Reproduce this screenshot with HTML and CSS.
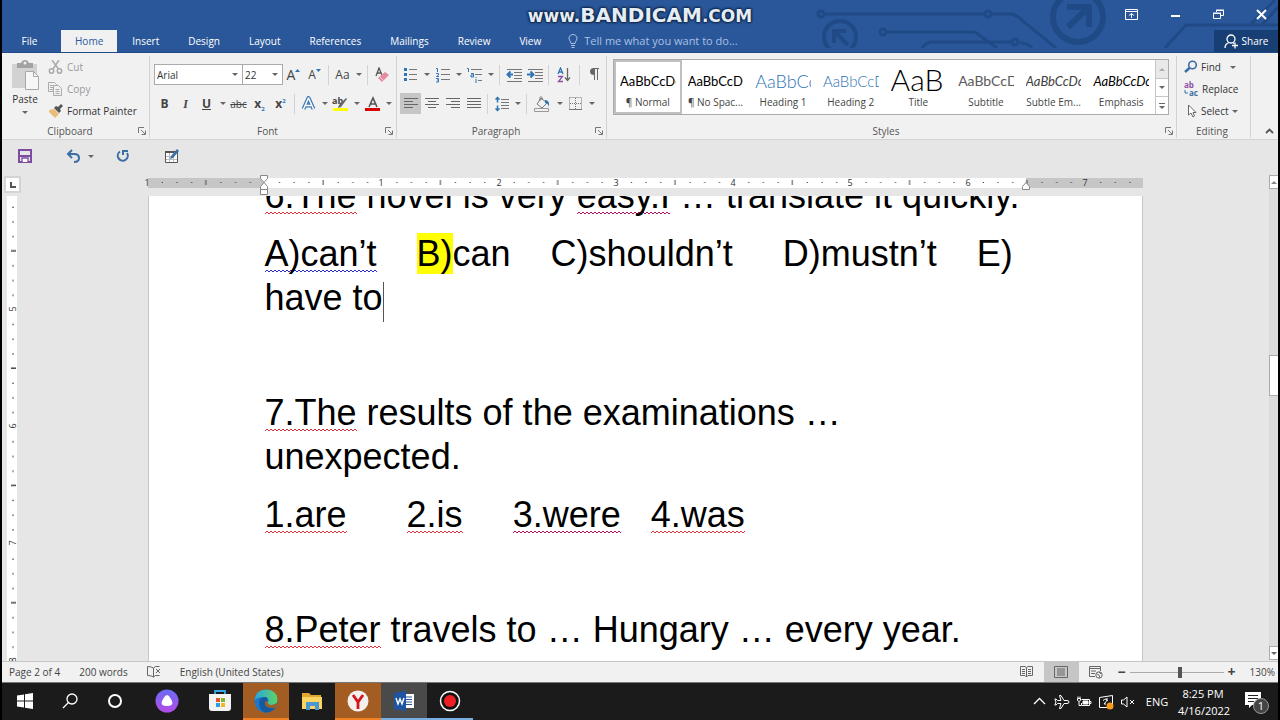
FILE: index.html
```html
<!DOCTYPE html>
<html lang="en">
<head>
  <meta charset="UTF-8" />
  <meta name="viewport" content="width=device-width, initial-scale=1.0" />
  <title>Word</title>
  <link rel="stylesheet" href="styles.css">
</head>
<body>
  <header class="top">
    <svg class="circuit" width="463" height="48" viewBox="815 0 463 48" fill="none" stroke="#1f4a86" stroke-width="3">
      <circle cx="821" cy="14" r="3"/><path d="M825 14H984M992 14h20q6 2 12 8l32 26"/><circle cx="988" cy="14" r="3"/>
      <circle cx="883" cy="32" r="3"/><path d="M887 32h88l22 16M922 48q4-6 10-6h80M1020 43q8 0 12 5"/><circle cx="1015" cy="42" r="3"/>
      <circle cx="840" cy="37" r="16" stroke-width="4"/><path d="M834 43V31h12M835 32l13 13" stroke-width="4"/>
      <circle cx="1078" cy="17" r="25" stroke-width="6"/><path d="M1067 7h22v20M1088 8l-20 19" stroke-width="6"/>
      <path d="M1165 48l21-23h92M1250 25l25-25M1262 25l16-18"/>
    </svg>
    <div class="title-bar">
      <div class="watermark">www.<b>BANDICAM</b>.COM</div>
      <div class="window-buttons">
        <button aria-label="Ribbon display options"><svg width="13" height="11" viewBox="0 0 13 11" fill="none" stroke="#fff"><path d="M.5 .5h12v10H.5zM.5 2.5h12M6.500 9V4.500M4 6.500l2.500-2 2.500 2"/></svg></button>
        <button aria-label="Minimize"><svg width="11" height="11" viewBox="0 0 11 11"><path d="M1 6h9v2H1z" fill="#fff"/></svg></button>
        <button aria-label="Restore"><svg width="11" height="11" viewBox="0 0 11 11" fill="none" stroke="#fff"><path d="M3.500 3V1.500h7v5H8M.5 4.500h7v5h-7zM3 1h8M0 4h8"/></svg></button>
        <button aria-label="Close"><svg width="11" height="11" viewBox="0 0 11 11" stroke="#fff" stroke-width="2"><path d="M1 1l9 9M10 1l-9 9"/></svg></button>
      </div>
    </div>
    <nav class="tabs">
      <button class="tab file">File</button>
      <button class="tab active">Home</button>
      <button class="tab">Insert</button>
      <button class="tab">Design</button>
      <button class="tab">Layout</button>
      <button class="tab">References</button>
      <button class="tab">Mailings</button>
      <button class="tab">Review</button>
      <button class="tab">View</button>
      <label class="tell-me">
        <svg width="10" height="14" viewBox="0 0 10 14" fill="none" stroke="#a9c1e4"><path d="M3 9.500Q3 8 1.800 6.800A4 4 0 1 1 8.200 6.800Q7 8 7 9.500zM3 11.500h4M3.500 13.500h3"/></svg>
        <input type="text" aria-label="Tell me" placeholder="Tell me what you want to do...">
      </label>
      <button class="share">
        <svg width="15" height="15" viewBox="0 0 15 15" fill="none" stroke="#fff" stroke-width="1.300"><circle cx="7" cy="5" r="4"/><path d="M1 14q0-4 4-5.500M9 8.500l1 1M8 11.500h6M11 8.500v6"/></svg>
        Share
      </button>
    </nav>
  </header>

  <div class="ribbon">
    <section class="group clipboard">
      <div class="group-body">
        <button class="paste">
          <svg width="28" height="30" viewBox="0 0 28 30"><path d="M1 4h25v24H1z" fill="#d2d2d2"/><path d="M6 3h4q1-3 4-3t4 3h4v5H6z" fill="#a3a3a3"/><circle cx="14" cy="3" r="1.500" fill="#eee"/><path d="M14.500 11.500h8l5 5v13h-13z" fill="#f6f6f6" stroke="#a8a8a8"/><path d="M22.500 11.500v5h5" fill="none" stroke="#a8a8a8"/></svg>
          <span>Paste</span>
          <i class="arrow"></i>
        </button>
        <div class="stack">
          <button disabled><svg width="16" height="14" viewBox="0 0 16 14" fill="none" stroke="#aaa" stroke-width="1.500"><path d="M4 0l6.500 9M11 0L5 9"/><circle cx="3.500" cy="11" r="2.200"/><circle cx="11.500" cy="11" r="2.200"/></svg>Cut</button>
          <button disabled><svg width="16" height="14" viewBox="0 0 16 14" fill="#f1f1f1" stroke="#aaa"><path d="M.5 .5h6l2 2v7h-8zM2 3.500h3M2 5.500h4M2 7.500h4"/><path d="M5.500 3.500h5l3 3v7h-8zM7.500 7.500h4M7.500 9.500h4M7.500 11.500h4"/></svg>Copy</button>
          <button><svg width="16" height="14" viewBox="0 0 16 14"><path d="M1 6l5-1 5 5-4 4-6-6z" fill="#e8bd79"/><path d="M6 4l2-2 2 1 3-3 2 2-3 3 1 2-2 2z" fill="#555"/></svg>Format Painter</button>
        </div>
      </div>
      <div class="group-label"><span>Clipboard</span><button class="launcher" aria-label="Clipboard settings"></button></div>
    </section>

    <section class="group font">
      <div class="group-body rows">
        <div class="row">
          <select class="font-name" aria-label="Font"><option>Arial</option></select>
          <select class="font-size" aria-label="Font size"><option>22</option></select>
          <button class="tool glyph" aria-label="Grow font"><span class="big">A</span><svg width="5" height="14" viewBox="0 0 5 14"><path d="M0 4l2.500-3L5 4z" fill="#2e75b6"/></svg></button>
          <button class="tool glyph" aria-label="Shrink font"><span>A</span><svg width="5" height="14" viewBox="0 0 5 14"><path d="M0 1h5L2.500 4z" fill="#2e75b6"/></svg></button>
          <i class="sep"></i>
          <button class="tool glyph">Aa</button><button class="drop" aria-label="Change case"></button>
          <i class="sep"></i>
          <button class="tool glyph" aria-label="Clear formatting"><svg width="16" height="16" viewBox="0 0 16 16"><path d="M2 9l3-8 3 7M3 6h4" fill="none" stroke="#555" stroke-width="1.300"/><path d="M4 11l7-6 4 3-7 7z" fill="#e68aa0"/><path d="M6 10l4 4" stroke="#f7d7de"/></svg></button>
        </div>
        <div class="row">
          <button class="tool glyph"><b>B</b></button>
          <button class="tool glyph"><b class="italic">I</b></button>
          <button class="tool glyph"><b class="under">U</b></button><button class="drop" aria-label="Underline style"></button>
          <button class="tool glyph"><s>abc</s></button>
          <button class="tool glyph"><b>x<sub>2</sub></b></button>
          <button class="tool glyph"><b>x<sup>2</sup></b></button>
          <i class="sep"></i>
          <button class="tool glyph" aria-label="Text effects"><svg width="15" height="15" viewBox="0 0 15 15" fill="none" stroke-linejoin="round"><path d="M2.500 13l5-11 5 11M4.500 9.500h6" stroke="#3a78b5" stroke-width="4"/><path d="M2.500 13l5-11 5 11M4.500 9.500h6" stroke="#fff" stroke-width="1.500"/></svg></button><button class="drop" aria-label="Text effect styles"></button>
          <button class="tool glyph" aria-label="Highlight"><svg width="17" height="16" viewBox="0 0 17 16"><text x="0" y="8" class="mark">ab</text><path d="M14 2l1 1-6 8-3 1 1-3z" fill="#666"/><path d="M1 12h15v3H1z" fill="#ff0"/></svg></button><button class="drop" aria-label="Highlight colour"></button>
          <button class="tool glyph" aria-label="Font colour"><svg width="16" height="16" viewBox="0 0 16 16"><path d="M4 11l4-9 4 9M5.500 8h5" fill="none" stroke="#555" stroke-width="1.600"/><path d="M0 12h15v3H0z" fill="#d80000"/></svg></button><button class="drop" aria-label="Font colours"></button>
        </div>
      </div>
      <div class="group-label"><span>Font</span><button class="launcher" aria-label="Font settings"></button></div>
    </section>

    <section class="group paragraph">
      <div class="group-body rows">
        <div class="row">
          <button class="tool" aria-label="Bullets"><svg width="14" height="15" viewBox="0 0 14 15"><path d="M0 1h3v3H0zM0 6h3v3H0zM0 11h3v3H0z" fill="#2e75b6"/><path d="M5 2.500h8M5 7.500h8M5 12.500h8" stroke="#777"/></svg></button><button class="drop" aria-label="Bullet styles"></button>
          <button class="tool" aria-label="Numbering"><svg width="14" height="16" viewBox="0 0 14 16"><path d="M0 1.500h1.500V5M0 6.500h2.500v1.500L.5 9.500H3M0 11.500h2.500v3.500H0M1 13h1.500" fill="none" stroke="#2e75b6"/><path d="M5 2.500h9M5 7.500h9M5 12.500h9" stroke="#777"/></svg></button><button class="drop" aria-label="Number styles"></button>
          <button class="tool" aria-label="Multilevel list"><svg width="16" height="16" viewBox="0 0 16 16"><path d="M0 1.500h1.500V5M4 6.500h2.500V10H4V8h2M9 10v1M9 12v4" fill="none" stroke="#2e75b6"/><path d="M4 2.500h11M8 7.500h7M11 13.500h4" stroke="#777"/></svg></button><button class="drop" aria-label="List styles"></button>
          <i class="sep"></i>
          <button class="tool" aria-label="Decrease indent"><svg width="16" height="14" viewBox="0 0 16 14"><path d="M1 1.500h15M8 4.500h8M8 7.500h8M8 10.500h8M1 13.500h15" stroke="#777"/><path d="M7 6.500H2M4.500 3.500l-3 3 3 3" fill="none" stroke="#2e75b6" stroke-width="2"/></svg></button>
          <button class="tool" aria-label="Increase indent"><svg width="16" height="14" viewBox="0 0 16 14"><path d="M1 1.500h15M8 4.500h8M8 7.500h8M8 10.500h8M1 13.500h15" stroke="#777"/><path d="M0 6.500h6M3.500 3.500l3 3-3 3" fill="none" stroke="#2e75b6" stroke-width="2"/></svg></button>
          <i class="sep"></i>
          <button class="tool wide" aria-label="Sort"><svg width="14" height="16" viewBox="0 0 14 16" fill="none"><path d="M1 7l2.500-6L6 7M2 5h3" stroke="#2e75b6" stroke-width="1.300"/><path d="M1 9.500h4.500l-4 5H6" stroke="#8a50a8" stroke-width="1.300"/><path d="M10.500 1v12M8 10.500l2.500 3 2.500-3" stroke="#666" stroke-width="1.300"/></svg></button>
          <i class="sep"></i>
          <button class="tool" aria-label="Show marks"><svg width="10" height="13" viewBox="0 0 10 13"><path d="M5 0h5v1H9v11H8V1H6v11H5V7Q1 7 1 3.500T5 0z" fill="#666"/></svg></button>
        </div>
        <div class="row">
          <button class="tool pressed" aria-label="Align left"><svg width="14" height="12" viewBox="0 0 14 12" stroke="#666"><path d="M0 .5h14M0 3.500h9M0 6.500h14M0 9.500h9"/></svg></button>
          <button class="tool" aria-label="Center"><svg width="14" height="12" viewBox="0 0 14 12" stroke="#666"><path d="M0 .5h14M3 3.500h8M0 6.500h14M3 9.500h8"/></svg></button>
          <button class="tool" aria-label="Align right"><svg width="14" height="12" viewBox="0 0 14 12" stroke="#666"><path d="M0 .5h14M5 3.500h9M0 6.500h14M5 9.500h9"/></svg></button>
          <button class="tool" aria-label="Justify"><svg width="14" height="12" viewBox="0 0 14 12" stroke="#666"><path d="M0 .5h14M0 3.500h14M0 6.500h14M0 9.500h14"/></svg></button>
          <i class="sep"></i>
          <button class="tool" aria-label="Line spacing"><svg width="14" height="16" viewBox="0 0 14 16"><path d="M6 3.500h8M6 6.500h8M6 9.500h8M6 12.500h8" stroke="#777"/><path d="M2.500 1v5.500M.5 3.500l2-2 2 2M2.500 15V9.500M.5 12.500l2 2 2-2" fill="none" stroke="#2e75b6" stroke-width="1.500"/></svg></button><button class="drop" aria-label="Line spacing options"></button>
          <i class="sep"></i>
          <button class="tool wide" aria-label="Shading"><svg width="16" height="16" viewBox="0 0 16 16" fill="none"><path d="M7 2l6 5-5 5-5-4zM6 5V1.500q1-2 2 0V4" stroke="#777"/><path d="M11 4q5 0 4 7-1-4-4-4z" fill="#2e75b6"/><path d="M.5 12.500h14v3H.5z" stroke="#999"/></svg></button><button class="drop" aria-label="Shading colours"></button>
          <button class="tool" aria-label="Borders"><svg width="14" height="14" viewBox="0 0 14 14" fill="none" stroke="#777"><path d="M.5 .5h12v12M.5 .5v12M6.500 1v11M1 6.500h11" stroke-dasharray="1 1"/><path d="M0 12.500h13"/></svg></button><button class="drop" aria-label="Border styles"></button>
        </div>
      </div>
      <div class="group-label"><span>Paragraph</span><button class="launcher" aria-label="Paragraph settings"></button></div>
    </section>

    <section class="group styles">
      <div class="group-body">
        <div class="gallery">
          <button class="style selected"><span class="sample">AaBbCcDc</span><span>¶ Normal</span></button>
          <button class="style"><span class="sample">AaBbCcDc</span><span>¶ No Spac...</span></button>
          <button class="style"><span class="sample h1">AaBbCc</span><span>Heading 1</span></button>
          <button class="style"><span class="sample h2">AaBbCcD</span><span>Heading 2</span></button>
          <button class="style"><span class="sample title">AaB</span><span>Title</span></button>
          <button class="style"><span class="sample subtitle">AaBbCcD</span><span>Subtitle</span></button>
          <button class="style"><span class="sample subtle">AaBbCcDc</span><span>Subtle Em...</span></button>
          <button class="style"><span class="sample emphasis">AaBbCcDc</span><span>Emphasis</span></button>
          <div class="gallery-scroll">
            <button disabled aria-label="Previous styles"><i class="arrow up"></i></button>
            <button aria-label="Next styles"><i class="arrow"></i></button>
            <button class="more" aria-label="More styles"><i class="arrow"></i></button>
          </div>
        </div>
      </div>
      <div class="group-label"><span>Styles</span><button class="launcher" aria-label="Styles settings"></button></div>
    </section>

    <section class="group editing">
      <div class="group-body">
        <div class="stack">
          <button><svg width="14" height="14" viewBox="0 0 14 14" fill="none" stroke="#3a6ea5"><circle cx="8.500" cy="5" r="3.800" stroke-width="1.600"/><path d="M5.500 8L1 12" stroke-width="2.500"/></svg>Find<i class="arrow gap"></i></button>
          <button><svg width="15" height="16" viewBox="0 0 15 16"><text x="0" y="7" class="rep a">ab</text><text x="5" y="15" class="rep b">ac</text><path d="M1 9v3h3" fill="none" stroke="#2e75b6"/></svg>Replace</button>
          <button><svg width="14" height="14" viewBox="0 0 14 14" fill="#fff" stroke="#666"><path d="M4.500 1v10l2.500-2 2 4 1.500-1-1.500-3.500h3z"/></svg>Select<i class="arrow"></i></button>
        </div>
      </div>
      <div class="group-label"><span>Editing</span></div>
    </section>
    <button class="collapse" aria-label="Collapse the ribbon"><svg width="9" height="6" viewBox="0 0 9 6" fill="none" stroke="#555" stroke-width="1.800"><path d="M1 5l3.500-3.500L8 5"/></svg></button>
  </div>

  <div class="quick-access">
    <button aria-label="Save"><svg width="16" height="16" viewBox="0 0 16 16" fill="none" stroke="#7c4da0" stroke-width="2"><path d="M2 2h12v12H2zM3 8h10"/><path d="M5 14v-4h6v4" fill="#fff" stroke-width="1.300"/></svg></button>
    <button aria-label="Undo"><svg width="16" height="16" viewBox="0 0 16 16" fill="none" stroke="#3a6ea5" stroke-width="2"><path d="M6 2L2 6l4 4M2 6h6q5 0 5 4t-5 4"/></svg><i class="arrow"></i></button>
    <button aria-label="Repeat"><svg width="16" height="16" viewBox="0 0 16 16" fill="none" stroke="#3a6ea5" stroke-width="2"><path d="M5 3.500A5 5 0 1 0 12 5M8 7V3h5"/></svg></button>
    <button aria-label="Draw table"><svg width="16" height="16" viewBox="0 0 16 16"><path d="M1.500 3.500h12v11h-12z" fill="#fff" stroke="#555"/><path d="M1 3h9v2H1z" fill="#555"/><path d="M5.500 5v9M9.500 9v5M2 8.500h5M2 11.500h11" stroke="#bbb"/><path d="M13 1l2 2-6 7-3 1 1-3z" fill="#3a6ea5"/></svg></button>
  </div>

  <div class="workspace">
    <div class="view">
      <div class="ruler-row">
        <div class="corner"><button class="tab-stop" aria-label="Tab stop"><svg width="10" height="10" viewBox="0 0 10 10"><path d="M3 2v5h5" fill="none" stroke="#555" stroke-width="2"/></svg></button></div>
        <svg class="ruler" width="995" height="10" viewBox="0 0 995 10">
          <defs>
            <pattern id="inch" x="-1" width="117.300" height="10" patternUnits="userSpaceOnUse">
              <path d="M14.700 4.500h1.200M29.300 4.500h1.200M44 4.500h1.200M73.300 4.500h1.200M88 4.500h1.200M102.600 4.500h1.200M58.800 2v5" stroke="#444"/>
            </pattern>
          </defs>
          <path d="M0 0h995v10H0z" fill="#c6c6c6"/><path d="M116 0h762v10H116z" fill="#fff"/>
          <path d="M0 0h995v10H0z" fill="url(#inch)"/>
          <g class="num"><text x="-1" y="8">1</text><text x="233" y="8">1</text><text x="351" y="8">2</text><text x="468" y="8">3</text><text x="585" y="8">4</text><text x="702" y="8">5</text><text x="820" y="8">6</text><text x="937" y="8">7</text></g>
          <g fill="#fff" stroke="#888"><path d="M112.500-2.500h7v3L116 4.500 112.500.5zM116 4.500l3.500 4v3h-7v-3zM112.500 11.500h7v5h-7zM878 4.500l3.500 4v3h-7v-3z"/></g>
        </svg>
      </div>
      <div class="canvas-row">
        <div class="side">
          <svg class="v-ruler" width="10" height="466" viewBox="0 0 10 466">
            <defs>
              <pattern id="vinch" y="-4" width="10" height="117.300" patternUnits="userSpaceOnUse">
                <path d="M6 14.700v1.200M6 29.300v1.200M6 44v1.200M6 73.300v1.200M6 88v1.200M6 102.600v1.200M4 58.800h5" stroke="#444" stroke-width="1.500"/>
              </pattern>
            </defs>
            <path d="M0 0h10v466H0z" fill="#fff"/><path d="M0 0h10v466H0z" fill="url(#vinch)"/>
            <g class="num"><text transform="translate(9 113) rotate(-90)">5</text><text transform="translate(9 230) rotate(-90)">6</text><text transform="translate(9 347) rotate(-90)">7</text><text transform="translate(9 464) rotate(-90)">8</text></g>
          </svg>
        </div>
        <main class="sheet">
          <article class="doc">
            <p><span class="wavy">6.The</span> novel is very <span class="wavy both">easy.I</span> … translate it quickly.</p>
            <p><span class="wavy grammar">A)can’t</span>    <mark>B)</mark>can    C)shouldn’t     D)mustn’t    E)<br>have to<i class="cursor"></i></p>
            <p class="blank"></p>
            <p><span class="wavy">7.The</span> results of the examinations …<br>unexpected.</p>
            <p><span class="wavy">1.are</span>      <span class="wavy">2.is</span>     <span class="wavy both">3.were</span>   <span class="wavy">4.was</span></p>
            <p class="blank"></p>
            <p><span class="wavy">8.Peter</span> travels to … Hungary … every year.</p>
          </article>
        </main>
      </div>
    </div>
    <div class="scrollbar">
      <button aria-label="Scroll up"><i class="arrow up"></i></button>
      <div class="before"></div>
      <div class="thumb"></div>
      <div class="after"></div>
      <button aria-label="Scroll down"><i class="arrow"></i></button>
    </div>
  </div>

  <footer class="status">
    <span>Page 2 of 4</span>
    <span>200 words</span>
    <svg width="14" height="12" viewBox="0 0 14 12" fill="none" stroke="#666"><path d="M6.500 2Q4 .5 .5 .5v9q4 0 6 1.500V2l2-1.500h4M6.500 11l2-1.500h4M9 3l4 4M13 3L9 7"/></svg>
    <span>English (United States)</span>
    <div class="views">
      <button aria-label="Read mode"><svg width="13" height="12" viewBox="0 0 13 12" fill="none" stroke="#666"><path d="M6.500 1.500L5 .5H.5v9H5l1.500 1.500L8 9.500h4.500v-9H8zV11M2 3.500h3M2 5.500h3M2 7.500h3M8 3.500h3M8 5.500h3M8 7.500h3"/></svg></button>
      <button class="on" aria-label="Print layout"><svg width="14" height="12" viewBox="0 0 14 12" fill="none" stroke="#666"><path d="M.5 .5h13v11H.5zM3 3h8M3 5h8M3 7h8M3 9h8"/></svg></button>
      <button aria-label="Web layout"><svg width="14" height="13" viewBox="0 0 14 13" fill="none" stroke="#666"><path d="M6 10.500H.5v-10h11V5M.5 2.500h11M2 5h5M2 7.500h4"/><circle cx="10" cy="9" r="3.200"/><path d="M8 8l2 1 1 3M10 6l2 2"/></svg></button>
    </div>
    <div class="zoom">
      <button aria-label="Zoom out">−</button>
      <input type="range" min="0" max="100" value="54" aria-label="Zoom">
      <button aria-label="Zoom in">+</button>
      <span>130%</span>
    </div>
  </footer>

  <div class="taskbar">
    <button aria-label="Start"><svg width="16" height="16" viewBox="0 0 16 16" fill="#fff"><path d="M0 2.500l7-1v6H0zM8 1.300L16 0v7.500H8zM0 8.500h7v6l-7-1zM8 8.500h8V16l-8-1.300z"/></svg></button>
    <button aria-label="Search"><svg width="16" height="16" viewBox="0 0 16 16" fill="none" stroke="#fff" stroke-width="1.300"><circle cx="10" cy="6" r="5"/><path d="M6.500 9.500L1 15"/></svg></button>
    <button aria-label="Cortana"><svg width="16" height="16" viewBox="0 0 16 16" fill="none" stroke="#fff" stroke-width="2"><circle cx="8" cy="8" r="6"/></svg></button>
    <button class="alice" aria-label="Alice"><svg width="24" height="24" viewBox="0 0 24 24"><defs><linearGradient id="al" x2="0" y2="1"><stop offset="0" stop-color="#6a6cf6"/><stop offset="1" stop-color="#b44be8"/></linearGradient></defs><circle cx="12" cy="12" r="11.500" fill="url(#al)"/><path d="M12 6q2 0 5 6 2 5-5 5t-5-5q3-6 5-6z" fill="#fff"/></svg></button>
    <button aria-label="Store"><svg width="22" height="24" viewBox="0 0 22 24"><path d="M6 6V2h10v4" fill="none" stroke="#35a7e8" stroke-width="1.800"/><path d="M0 5h22v14q0 3-3 3H3q-3 0-3-3z" fill="#f3f3f3"/><path d="M7 9h4v4H7z" fill="#e8532c"/><path d="M12 9h4v4h-4z" fill="#7db72f"/><path d="M7 14h4v4H7z" fill="#2d9fe0"/><path d="M12 14h4v4h-4z" fill="#f5b821"/></svg></button>
    <button class="orange" aria-label="Edge"><svg width="24" height="24" viewBox="0 0 24 24"><defs><linearGradient id="ed" x1="0" y1="0" x2="1" y2="0"><stop offset="0" stop-color="#2aa5e0"/><stop offset="1" stop-color="#5bd564"/></linearGradient></defs><circle cx="12" cy="12" r="11.500" fill="#1b78c8"/><path d="M.6 11Q1.500.6 12 .5q11 .5 11.500 9.500 0 6-6.500 6-4 0-3-3 1-1 0-3-1-2-4-2-6 0-9.400 3z" fill="url(#ed)"/><path d="M5 12q2-4 7-4 2 1 2 4-3-1-3 2 0 6 10 5-4 5-10 4.500Q5 22 5 12z" fill="#155a9c"/><path d="M14 12q-1 4 3 4 4 0 6-2l-1.500 4.500Q11 20 11 14q0-2 3-2z" fill="#a35c22"/></svg></button>
    <button aria-label="File Explorer"><svg width="22" height="20" viewBox="0 0 22 20"><path d="M1 2h7l2 2h10v13H1z" fill="#e2a72e"/><path d="M1 6h20v12H1z" fill="#fcd462"/><path d="M5 19v-8h13v8h-4v-4H9v4z" fill="#4a98d2"/></svg></button>
    <button class="orange" aria-label="Yandex"><svg width="22" height="22" viewBox="0 0 22 22"><circle cx="11" cy="11" r="10.500" fill="#f4f0ee"/><path d="M6 5l5 7 5-7M11 11v8" fill="none" stroke="#d4151c" stroke-width="2.800"/></svg></button>
    <button class="current" aria-label="Word"><svg width="22" height="20" viewBox="0 0 22 20"><path d="M11 3h10v14H11z" fill="#fff"/><path d="M13 6h6M13 8.500h6M13 11h6M13 13.500h6" stroke="#2a579a"/><path d="M1 2l12-2v20L1 18z" fill="#1f54a0"/><path d="M3 7l2 6 2-5 2 5 2-6" fill="none" stroke="#fff" stroke-width="1.400"/></svg></button>
    <button class="running" aria-label="Bandicam"><svg width="22" height="22" viewBox="0 0 22 22"><circle cx="11" cy="11" r="9.500" fill="#111" stroke="#fff" stroke-width="1.500"/><circle cx="11" cy="11" r="6" fill="#ee1f24"/></svg></button>
    <div class="tray">
      <svg width="16" height="16" viewBox="0 0 16 16" fill="none" stroke="#fff" stroke-width="1.300"><path d="M2 10l5.500-5.500L13 10"/></svg>
      <svg width="16" height="16" viewBox="0 0 16 16" fill="none" stroke="#fff"><path d="M15 8q0-1.500-2-1.500H10L7 1.500H5.500l1.500 5H3.500L2 5H.8L2 8 .8 11H2l1.500-1.500H7l-1.500 5H7l3-5h3q2 0 2-1.500z"/></svg>
      <svg width="16" height="16" viewBox="0 0 16 16" fill="none" stroke="#fff"><path d="M5.500 5.500h8v6h-8V9M13.500 7.500h1.500v2h-1.500"/><path d="M7 7h5v3H7z" fill="#fff"/><path d="M1.500 4.500h3v2q-1.500 2-3 0zM2 4V2.500M4 4V2.500M3 8v3.500h2"/></svg>
      <svg width="16" height="16" viewBox="0 0 16 16" fill="none" stroke="#fff"><path d="M1.500 3.500l13-2v9M9 13.500H1.500v-10M5 6.500q4-3 4 0L6 10h2M9 4v3"/><circle cx="12" cy="12" r="3.500" fill="#f79a1e" stroke="none"/></svg>
      <svg width="16" height="16" viewBox="0 0 16 16" fill="none" stroke="#fff"><path d="M1.500 6v4h2l3.500 3V3L3.500 6zM10 6l4 4M14 6l-4 4"/></svg>
      <span class="lang">ENG</span>
      <time class="clock">8:25 PM<br>4/16/2022</time>
      <button class="notice" aria-label="Notifications"><svg width="26" height="26" viewBox="0 0 26 26"><path d="M2 3h16v13h-9l-3 3v-3H2z" fill="#fff"/><path d="M5 6.500h10M5 9.500h10M5 12.500h6" stroke="#222"/><circle cx="18" cy="17" r="7.500" fill="#444" stroke="#999"/><text x="18" y="21" class="badge">1</text></svg></button>
    </div>
  </div>
</body>
</html>
```
FILE: styles.css
```css
* {
  box-sizing: border-box;
}
html, body {
  margin: 0;
  height: 100%;
}
body {
  display: flex;
  flex-direction: column;
  border: solid #000;
  border-width: 0 2px;
  font-family: "Open Sans", "Noto Sans", sans-serif;
  font-size: 10px;
  line-height: 14px;
  color: #333;
  background: #e6e6e6;
  overflow: hidden;
}
button, input, select {
  font: inherit;
  color: inherit;
  border: 0;
  padding: 0;
  margin: 0;
  background: none;
}
button {
  display: flex;
  align-items: center;
  justify-content: center;
}
svg {
  flex: none;
}

/* title bar and tabs */
.top {
  position: relative;
  background: #2a579a;
  color: #fff;
  border-bottom: 1px solid #1f4a86;
}
.circuit {
  position: absolute;
  top: 0;
  right: 0;
}
.title-bar, .tabs {
  position: relative;
  display: flex;
}
.title-bar {
  height: 30px;
  justify-content: center;
}
.watermark {
  font: 17px/31px "DejaVu Sans", sans-serif;
  font-weight: bold;
  color: #e4edf5;
  text-shadow: 0 0 3px #0a1c38, 0 0 3px #0a1c38, 0 0 2px #0a1c38;
}
.watermark b {
  font-size: 20px;
}
.window-buttons {
  position: absolute;
  right: 11px;
  top: 9px;
  display: flex;
  gap: 32px;
}
.tabs {
  height: 22px;
}
.tab {
  padding: 0 14px;
  margin-right: 1px;
}
.tab.file {
  width: 55px;
  margin-right: 4px;
}
.tab.active {
  background: #f1f1f1;
  color: #2a579a;
}
.tell-me {
  display: flex;
  align-items: center;
  gap: 6px;
  margin-left: 12px;
}
.tell-me input {
  width: 180px;
  font-size: 11px;
}
.tell-me input::placeholder {
  color: #a9c1e4;
  opacity: 1;
}
.share {
  margin-left: auto;
  width: 64px;
  gap: 3px;
  background: #173f73;
}

/* ribbon */
.ribbon {
  display: flex;
  height: 87px;
  background: #f1f1f1;
  border-bottom: 1px solid #d2d2d2;
}
.group {
  display: flex;
  flex-direction: column;
  margin: 3px 0 1px;
  border-right: 1px solid #d2d2d2;
}
.group-body {
  display: flex;
  flex: 1;
}
.group-label {
  display: flex;
  align-items: center;
  height: 14px;
  padding-right: 3px;
  text-align: center;
  color: #555;
}
.group-label span {
  flex: 1;
}
.launcher {
  width: 8px;
  height: 8px;
  background: url("data:image/svg+xml,%3Csvg xmlns='http://www.w3.org/2000/svg' width='8' height='8' fill='none' stroke='%23777'%3E%3Cpath d='M.5 6V.5H6M3 3l4 4M7.500 3.500v4h-4'/%3E%3C/svg%3E");
}
.clipboard {
  width: 148px;
}
.font {
  width: 247px;
}
.paragraph {
  width: 210px;
}
.styles {
  flex: 1;
}
.editing {
  width: 74px;
}
.paste {
  flex-direction: column;
  justify-content: flex-start;
  width: 46px;
  padding-top: 4px;
}
.paste span {
  margin: 2px 0 5px;
}
.stack {
  display: flex;
  flex-direction: column;
  align-items: flex-start;
}
.stack button {
  height: 22px;
  gap: 3px;
}
.stack button:disabled {
  color: #999;
}
.editing .stack {
  padding-left: 7px;
}
.arrow {
  border: 3px solid transparent;
  border-top-color: #666;
  border-bottom: 0;
}
.arrow.gap {
  margin-left: 6px;
}
.arrow.up {
  border-top: 0;
  border-bottom: 3px solid #888;
}
.rows {
  flex-direction: column;
  gap: 8px;
  padding: 8px 0 0 3px;
}
.font .rows {
  padding-left: 4px;
}
.row {
  display: flex;
  align-items: center;
  height: 21px;
}
.row select {
  height: 21px;
  appearance: none;
  padding: 0 2px;
  border: 1px solid #ababab;
  background: #fff url("data:image/svg+xml,%3Csvg xmlns='http://www.w3.org/2000/svg' width='6' height='3'%3E%3Cpath d='M0 0h6L3 3z' fill='%23666'/%3E%3C/svg%3E") no-repeat right 4px center;
}
.font-name {
  width: 89px;
}
.row .font-size {
  width: 41px;
  margin-left: -1px;
}
.tool {
  width: 21px;
  height: 21px;
}
.tool.wide {
  width: 24px;
}
.pressed {
  background: #c6c6c6;
}
.drop {
  width: 11px;
  height: 21px;
}
.drop::after {
  content: "";
  border: 3px solid transparent;
  border-top-color: #666;
  border-bottom: 0;
}
.sep {
  width: 1px;
  height: 20px;
  margin: 0 3px;
  background: #d2d2d2;
}
.glyph {
  font-size: 12px;
  color: #444;
}
.glyph .big {
  font-size: 14px;
}
.glyph s {
  font-size: 10px;
}
.glyph sub, .glyph sup {
  font-size: 6px;
  line-height: 0;
  color: #2e75b6;
}
.italic {
  font-family: "Liberation Serif", serif;
  font-style: italic;
}
.under {
  text-decoration: underline;
}
.mark {
  font-size: 9px;
  font-weight: bold;
  fill: #444;
}
.rep {
  font-size: 8px;
  font-weight: bold;
}
.rep.a {
  fill: #8a50a8;
}
.rep.b {
  fill: #3a6ea5;
}

/* style gallery */
.gallery {
  display: grid;
  grid-template-columns: repeat(8, 1fr) 13px;
  flex: 1;
  height: 56px;
  margin: 3px 7px 0 6px;
  border: 1px solid #ababab;
  background: #fff;
}
.style {
  flex-direction: column;
  min-width: 0;
  padding: 0 4px;
  border: 2px solid transparent;
  color: #444;
  white-space: nowrap;
}
.style.selected {
  border-color: #c0c0c0;
}
.sample {
  width: 100%;
  height: 26px;
  margin-bottom: 3px;
  overflow: hidden;
  text-align: left;
  font: 13px/30px Lato, sans-serif;
  color: #000;
}
.sample.h1, .sample.h2 {
  color: #2e74b5;
  font-weight: 300;
}
.sample.h1 {
  font-size: 18px;
}
.sample.h2 {
  font-size: 15px;
}
.sample.title {
  font-size: 30px;
  line-height: 26px;
  font-weight: 300;
}
.sample.subtitle {
  font-size: 14px;
  color: #5a5a5a;
}
.sample.subtle {
  font-style: italic;
  color: #404040;
}
.sample.emphasis {
  font-style: italic;
}
.gallery-scroll {
  display: grid;
  grid-template-rows: 1fr 1fr 1fr;
  border-left: 1px solid #c6c6c6;
}
.gallery-scroll button + button {
  border-top: 1px solid #c6c6c6;
}
.gallery-scroll button:disabled {
  background: #e1e1e1;
  opacity: 0.7;
}
.gallery-scroll .more {
  flex-direction: column;
}
.more::before {
  content: "";
  width: 6px;
  height: 1px;
  margin-bottom: 2px;
  background: #666;
}
.collapse {
  align-self: flex-end;
  width: 27px;
  height: 16px;
  padding-left: 10px;
}

/* quick access toolbar */
.quick-access {
  display: flex;
  align-items: center;
  gap: 33px;
  height: 32px;
  padding-left: 15px;
}
.quick-access button {
  width: 16px;
}
.quick-access .arrow {
  margin: 0 -12px 0 6px;
}

/* rulers, page and scroll bar */
.workspace {
  display: flex;
  flex: 1;
  min-height: 0;
}
.view {
  display: flex;
  flex-direction: column;
  flex: 1;
  min-width: 0;
}
.ruler-row {
  display: flex;
  height: 24px;
}
.corner, .side {
  flex: none;
  width: 19px;
}
.corner {
  padding: 4px 2px;
}
.tab-stop {
  width: 17px;
  height: 17px;
  border: 2px solid #d4d4d4;
  background: #fff;
}
.ruler {
  margin: 6px auto 0;
  overflow: visible;
}
.num {
  font-size: 9px;
  text-anchor: middle;
  fill: #333;
}
.canvas-row {
  display: flex;
  flex: 1;
  min-height: 0;
  overflow: hidden;
}
.side {
  padding-left: 5px;
}
.sheet {
  width: 995px;
  margin: 0 auto;
  padding: 0 116px;
  overflow: hidden;
  border: solid #c6c6c6;
  border-width: 0 1px;
  background: #fff;
}
.doc {
  margin-top: -22px;
  font: 36px/44px "Liberation Sans", Arial, sans-serif;
  color: #000;
}
.doc p {
  margin: 0 0 14px;
  white-space: pre;
}
.doc .blank {
  height: 43px;
}
.doc mark {
  color: inherit;
  background: #ff0;
}
.wavy {
  background: url("data:image/svg+xml,%3Csvg xmlns='http://www.w3.org/2000/svg' width='4' height='4' fill='none' stroke='%23d8303a'%3E%3Cpath d='M-1 2l1 1 2-2 2 2 1-1'/%3E%3C/svg%3E") repeat-x left bottom 1px;
}
.wavy.grammar {
  background-image: url("data:image/svg+xml,%3Csvg xmlns='http://www.w3.org/2000/svg' width='4' height='4' fill='none' stroke='%232a2ac8'%3E%3Cpath d='M-1 2l1 1 2-2 2 2 1-1'/%3E%3C/svg%3E");
}
.wavy.both {
  background-image: url("data:image/svg+xml,%3Csvg xmlns='http://www.w3.org/2000/svg' width='4' height='4' fill='none' stroke='%23b0105c'%3E%3Cpath d='M-1 2l1 1 2-2 2 2 1-1'/%3E%3C/svg%3E");
}
.cursor {
  display: inline-block;
  width: 1px;
  height: 40px;
  vertical-align: -8px;
  margin-bottom: -4px;
  background: #555;
}
.scrollbar {
  display: flex;
  flex-direction: column;
  width: 9px;
  padding: 3px 0 1px;
}
.scrollbar button {
  height: 14px;
  overflow: hidden;
}
.scrollbar button, .thumb {
  flex: none;
  border: 1px solid #ababab;
  border-right: 0;
  background: #fff;
}
.thumb {
  height: 41px;
}
.before, .after {
  flex: 2;
  background: #dadada;
}
.after {
  flex: 3;
}

/* status bar */
.status {
  display: flex;
  align-items: center;
  height: 21px;
  padding-left: 7px;
  background: #f1f1f1;
  border-top: 1px solid #c6c6c6;
  color: #444;
  gap: 19px;
}
.views {
  display: flex;
  align-self: stretch;
  margin-left: auto;
}
.views button {
  width: 35px;
}
.views .on {
  background: #c6c6c6;
}
.zoom {
  display: flex;
  align-items: center;
  gap: 3px;
  padding-right: 3px;
}
.views + .zoom {
  margin-left: -16px;
}
.zoom button {
  width: 10px;
  font-size: 14px;
  font-weight: bold;
}
.zoom span {
  margin-left: 10px;
}
.zoom input {
  width: 94px;
  height: 14px;
  appearance: none;
  background: linear-gradient(#aaa, #aaa) no-repeat center / 100% 1px;
}
.zoom input::-webkit-slider-thumb {
  appearance: none;
  width: 4px;
  height: 11px;
  background: #555;
}

/* taskbar */
.taskbar {
  display: flex;
  height: 38px;
  border-top: 1px solid #777;
  background: #1b1b1b;
  color: #fff;
  font-size: 11px;
}
.taskbar > button {
  width: 46px;
  border-bottom: 2px solid transparent;
}
.taskbar > button:nth-child(-n+3) {
  width: 45px;
}
.taskbar > .alice {
  width: 60px;
}
.taskbar > .orange {
  background: #a35c22;
  border-color: #f5801f;
}
.taskbar > .current {
  background: #4a4a4a;
  border-color: #76b0e0;
}
.taskbar > .running {
  border-color: #76b0e0;
}
.tray {
  display: flex;
  align-items: center;
  gap: 6px;
  margin-left: auto;
}
.lang {
  width: 30px;
  text-align: center;
}
.clock {
  width: 50px;
  line-height: 17px;
  text-align: center;
}
.notice {
  width: 44px;
}
.badge {
  font-size: 11px;
  text-anchor: middle;
  fill: #fff;
}
```
